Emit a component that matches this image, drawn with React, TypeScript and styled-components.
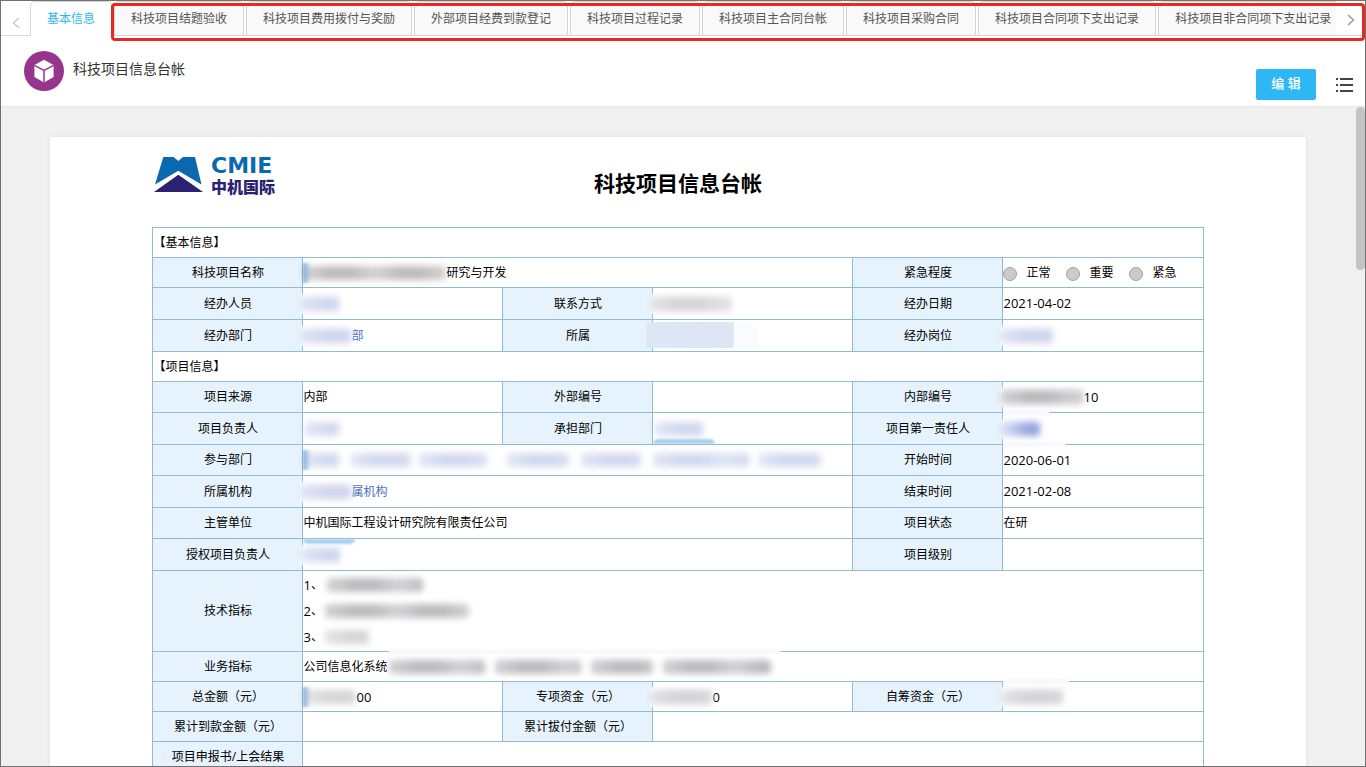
import React from 'react';
import styled, { createGlobalStyle, css } from 'styled-components';

const GlobalStyle = createGlobalStyle`
  * { box-sizing: border-box; }
  body {
    margin: 0;
    font-family: "Open Sans", "Noto Sans CJK SC", sans-serif;
    font-size: 12px;
    color: #000;
  }
  button { font: inherit; border: 0; padding: 0; background: none; cursor: pointer; }
`;

const LINE = '#92bad4';

const Page = styled.div`
  position: relative;
  display: flex;
  flex-direction: column;
  height: 100vh;
  overflow: hidden;
  border: 1px solid #727073;
  background: #fff;
`;

/* ---------- tabs ---------- */

const TabBar = styled.nav`
  display: flex;
  flex: none;
  height: 35px;
  box-shadow: inset 0 -1px #d6d6d6;
`;

const Arrow = styled.button<{ $faint?: boolean }>`
  display: flex;
  flex: none;
  align-items: center;
  justify-content: center;
  width: 29px;
  padding-top: ${(p) => (p.$faint ? '9px' : '2px')};
  color: ${(p) => (p.$faint ? '#c8c8c8' : '#999')};
`;

const TabStrip = styled.div`
  display: flex;
  flex: 1;
  gap: 2px;
  min-width: 0;
  overflow: hidden;
`;

const Tab = styled.button<{ $active?: boolean }>`
  && {
    flex: none;
    padding: 0 16px;
    border: 1px solid #d6d6d6;
    border-radius: 5px 5px 0 0;
    background: #f9f9f9;
    color: #555;
    line-height: 32px;
    white-space: nowrap;
    ${(p) =>
      p.$active &&
      css`
        border-bottom-color: #fff;
        background: #fff;
        color: #2db7f5;
      `}
  }
`;

const Highlight = styled.div`
  position: absolute;
  top: 2px;
  left: 110px;
  right: 0;
  height: 38px;
  border: 3px solid #e52a22;
  border-radius: 4px;
  pointer-events: none;
`;

/* ---------- header ---------- */

const Header = styled.header`
  display: flex;
  flex: none;
  gap: 9px;
  height: 71px;
  padding: 15px 12px 6px 23px;
  border-bottom: 1px solid #e6e6e6;
`;

const Badge = styled.span`
  display: flex;
  align-items: center;
  justify-content: center;
  width: 40px;
  height: 40px;
  border-radius: 50%;
  background: #96358c;
`;

const HeaderTitle = styled.span`
  flex: 1;
  color: #333;
  font-size: 14px;
  line-height: 36px;
`;

const Actions = styled.div`
  display: flex;
  align-items: center;
  align-self: flex-end;
  gap: 20px;
`;

const EditButton = styled.button`
  && {
    width: 60px;
    height: 31px;
    border-radius: 2px;
    background: #2db7f5;
    color: #fff;
    font-weight: 500;
    font-size: 13px;
    line-height: 28px;
    padding-bottom: 3px;
  }
`;

const MenuButton = styled.button`
  display: flex;
  color: #444;
`;

/* ---------- sheet ---------- */

const Canvas = styled.main`
  position: relative;
  flex: 1;
  min-height: 0;
  overflow: hidden;
  padding: 30px 59px 0 49px;
  background: #f0f0f0;
`;

const ScrollThumb = styled.div`
  position: absolute;
  top: 0;
  right: 0;
  width: 9px;
  height: 163px;
  border-radius: 5px;
  background: #c3c3c3;
`;

const Sheet = styled.article`
  display: flex;
  flex-direction: column;
  align-items: center;
  min-height: 100%;
  background: #fff;
  box-shadow: 0 0 4px rgba(0, 0, 0, 0.08);
`;

const SheetHead = styled.div`
  display: grid;
  grid-template-columns: 1fr auto 1fr;
  width: 100%;
  max-width: 1050px;
  height: 90px;
  padding-top: 19px;
`;

const Logo = styled.div`
  display: flex;
  gap: 8px;
  height: 40px;
  padding-left: 1px;
`;

const LogoText = styled.div`
  display: flex;
  flex-direction: column;
  font-weight: 700;
`;

const LogoLatin = styled.span`
  color: #0a68ae;
  font-family: "DejaVu Sans", sans-serif;
  font-size: 22px;
  line-height: 20px;
`;

const LogoHan = styled.span`
  color: #2a2170;
  font-family: "Noto Sans CJK SC", sans-serif;
  font-weight: 900;
  font-size: 16px;
  line-height: 20px;
`;

const SheetTitle = styled.h1`
  margin: 0;
  padding-top: 9px;
  font-size: 21px;
  font-weight: 700;
  line-height: 36px;
`;

const Grid = styled.table`
  width: 100%;
  max-width: 1050px;
  table-layout: fixed;
  border-collapse: collapse;
`;

const Row = styled.tr<{ $h: number }>`
  height: ${(p) => p.$h}px;
`;

const cell = css`
  position: relative;
  padding: 0;
  border: 1px solid ${LINE};
  font-weight: 400;
  line-height: 18px;
`;

const Section = styled.th`
  ${cell}
  text-align: left;
`;

const Label = styled.th`
  ${cell}
  background: #e6f3fc;
  background-clip: padding-box;
  text-align: center;
`;

const Value = styled.td`
  ${cell}
`;

const Line = styled.div<{ $tall?: boolean }>`
  display: flex;
  align-items: center;
  white-space: nowrap;
  line-height: ${(p) => (p.$tall ? '26px' : '18px')};
`;

const Num = styled.span`
  font-size: 13px;
`;

const Link = styled.a`
  color: #4a6fc0;
  text-decoration: none;
`;

const RadioLabel = styled.label`
  display: flex;
  align-items: center;
  gap: 9px;
  margin-right: 16px;
`;

const Radio = styled.input`
  appearance: none;
  width: 14px;
  height: 14px;
  margin: 3px 0 0;
  border: 1px solid #a2a2a2;
  border-radius: 50%;
  background: #cbcbcb;
`;

/* ---------- blurred-out values ---------- */

const tones = {
  grey: ['rgba(110,110,115,.46)', 'rgba(130,130,135,.38)'],
  dim: ['rgba(130,130,135,.33)', 'rgba(150,150,155,.28)'],
  blue: ['rgba(110,130,200,.31)', 'rgba(130,150,215,.26)'],
  ink: ['rgba(70,95,200,.55)', 'rgba(120,140,220,.35)'],
};

const Masked = styled.span<{ $gap?: number; $cover?: boolean }>`
  position: relative;
  display: flex;
  flex: none;
  align-items: center;
  height: 18px;
  margin-left: ${(p) => p.$gap ?? 0}px;
  ${(p) =>
    p.$cover &&
    css`
      background: rgba(252, 252, 254, 0.9);
      box-shadow: 0 0 3px 1px rgba(252, 252, 254, 0.9);
    `}
`;

const Smudge = styled.span<{ $w: number; $tone?: keyof typeof tones }>`
  width: ${(p) => p.$w}px;
  height: 14px;
  border-radius: 4px;
  background: repeating-linear-gradient(
    90deg,
    ${(p) => tones[p.$tone ?? 'grey'][1]} 0 6px,
    ${(p) => tones[p.$tone ?? 'grey'][0]} 26px 47px,
    ${(p) => tones[p.$tone ?? 'grey'][1]} 70px
  );
  filter: blur(3px);
`;

const BlueEdge = styled.span`
  position: absolute;
  top: -1px;
  left: 0;
  width: 8px;
  height: 20px;
  background: linear-gradient(90deg, rgba(111, 163, 210, 0.85), rgba(160, 200, 235, 0));
  filter: blur(1px);
`;

const BlueGlow = styled.span<{ $w: number; $low?: boolean }>`
  position: absolute;
  left: 0;
  ${(p) => (p.$low ? 'bottom: 0;' : 'top: 0;')}
  width: ${(p) => p.$w}px;
  height: 5px;
  border-radius: ${(p) => (p.$low ? '5px 5px 0 0' : '0 0 5px 5px')};
  background: #a8d0ee;
  filter: blur(1px);
`;

const Veil = styled.span<{ $w: number; $low?: boolean; $from?: number }>`
  position: absolute;
  left: ${(p) => p.$from ?? 0}px;
  ${(p) => (p.$low ? 'bottom: -3px;' : 'top: -3px;')}
  width: ${(p) => p.$w}px;
  height: 5px;
  background: #f7fafd;
`;

const Block = styled.span`
  position: absolute;
  top: 2px;
  left: -7px;
  width: 112px;
  height: 26px;
  background: linear-gradient(90deg, #dde7f7 0 20%, #dfe5f5 78%, #fafcff 79%);
`;

const tabs = [
  '基本信息',
  '科技项目结题验收',
  '科技项目费用拨付与奖励',
  '外部项目经费到款登记',
  '科技项目过程记录',
  '科技项目主合同台帐',
  '科技项目采购合同',
  '科技项目合同项下支出记录',
  '科技项目非合同项下支出记录',
];

const Chevron = ({ left }: { left?: boolean }) => (
  <svg width="8" height="12" viewBox="0 0 8 12" fill="none" stroke="currentColor" strokeWidth="1.5">
    <path d={left ? 'M7 1 1.5 6 7 11' : 'M1 1 6.5 6 1 11'} />
  </svg>
);

const CubeIcon = () => (
  <svg width="20" height="24" viewBox="0 0 20 24">
    <path fill="#fff" d="M10 .8 19.600 6V18L10 23.400.4 18V6Z" />
    <path fill="none" stroke="#96358c" strokeWidth="1.5" d="M.4 6.300 10 11.300 19.600 6.300M10 11.300V23.400" />
  </svg>
);

const ListIcon = () => (
  <svg width="17" height="15" viewBox="0 0 17 15" fill="currentColor">
    <path d="M0 1h2v2H0zM4 1h13v2H4zM0 7h2v2H0zM4 7h13v2H4zM0 13h2v2H0zM4 13h13v2H4z" />
  </svg>
);

const LogoMark = () => (
  <svg width="49" height="37" viewBox="0 0 49 37">
    <path fill="#0a68ae" d="M9.300 1H19.500L24.300 5 29 1H41L47.500 28.500 24.300 14.700 1 28.500Z" />
    <path fill="#2a2170" d="M0 36 24.300 18.700 49 36Z" />
  </svg>
);

export default function App() {
  return (
    <Page>
      <GlobalStyle />
      <TabBar>
        <Arrow $faint aria-label="上一页"><Chevron left /></Arrow>
        <TabStrip>
          {tabs.map((t, i) => (
            <Tab key={t} $active={i === 0}>{t}</Tab>
          ))}
        </TabStrip>
        <Arrow aria-label="下一页"><Chevron /></Arrow>
      </TabBar>
      <Highlight />

      <Header>
        <Badge><CubeIcon /></Badge>
        <HeaderTitle>科技项目信息台帐</HeaderTitle>
        <Actions>
          <EditButton>编 辑</EditButton>
          <MenuButton aria-label="菜单"><ListIcon /></MenuButton>
        </Actions>
      </Header>

      <Canvas>
        <Sheet>
          <SheetHead>
            <Logo>
              <LogoMark />
              <LogoText>
                <LogoLatin>CMIE</LogoLatin>
                <LogoHan>中机国际</LogoHan>
              </LogoText>
            </Logo>
            <SheetTitle>科技项目信息台帐</SheetTitle>
          </SheetHead>

          <Grid>
            <colgroup>
              <col width="150" /><col width="200" /><col width="150" />
              <col width="200" /><col width="150" /><col width="200" />
            </colgroup>
            <tbody>
              <Row $h={30}><Section colSpan={6}>【基本信息】</Section></Row>
              <Row $h={30}>
                <Label>科技项目名称</Label>
                <Value colSpan={3}>
                  <Line>
                    <Masked><Smudge $w={143} /><BlueEdge /></Masked>
                    研究与开发
                  </Line>
                </Value>
                <Label>紧急程度</Label>
                <Value>
                  <Line>
                    {['正常', '重要', '紧急'].map((o) => (
                      <RadioLabel key={o}><Radio type="radio" name="urgency" disabled />{o}</RadioLabel>
                    ))}
                  </Line>
                </Value>
              </Row>
              <Row $h={32}>
                <Label>经办人员</Label>
                <Value><Line><Masked $gap={-2} $cover><Smudge $w={38} $tone="blue" /></Masked></Line></Value>
                <Label>联系方式</Label>
                <Value><Line><Masked $gap={-2} $cover><Smudge $w={80} $tone="dim" /></Masked></Line></Value>
                <Label>经办日期</Label>
                <Value><Num>2021-04-02</Num></Value>
              </Row>
              <Row $h={32}>
                <Label>经办部门</Label>
                <Value>
                  <Line>
                    <Masked $gap={-2} $cover><Smudge $w={50} $tone="blue" /></Masked>
                    <Link href="#dept">部</Link>
                  </Line>
                </Value>
                <Label>所属</Label>
                <Value><Block /></Value>
                <Label>经办岗位</Label>
                <Value><Line><Masked $gap={-2} $cover><Smudge $w={52} $tone="blue" /></Masked></Line></Value>
              </Row>
              <Row $h={30}><Section colSpan={6}>【项目信息】</Section></Row>
              <Row $h={31}>
                <Label>项目来源</Label>
                <Value>内部</Value>
                <Label>外部编号</Label>
                <Value />
                <Label>内部编号</Label>
                <Value>
                  <Line>
                    <Masked $gap={-2} $cover><Smudge $w={82} /></Masked>
                    <Num>10</Num>
                  </Line>
                </Value>
              </Row>
              <Row $h={32}>
                <Label>项目负责人</Label>
                <Value><Line><Masked $gap={2}><Smudge $w={34} $tone="blue" /></Masked></Line></Value>
                <Label>承担部门</Label>
                <Value>
                  <Line><Masked $gap={2}><Smudge $w={48} $tone="blue" /></Masked></Line>
                  <BlueGlow $w={62} $low />
                </Value>
                <Label>项目第一责任人</Label>
                <Value>
                  <Veil $w={46} />
                  <Veil $w={62} $low />
                  <Line><Masked $gap={-1} $cover><Smudge $w={38} $tone="ink" /></Masked></Line>
                </Value>
              </Row>
              <Row $h={31}>
                <Label>参与部门</Label>
                <Value colSpan={3}>
                  <Line>
                    <Masked><Smudge $w={36} $tone="blue" /><BlueEdge /></Masked>
                    <Masked $gap={12}><Smudge $w={60} $tone="blue" /></Masked>
                    <Masked $gap={8}><Smudge $w={68} $tone="blue" /></Masked>
                    <Masked $gap={20}><Smudge $w={62} $tone="blue" /></Masked>
                    <Masked $gap={12}><Smudge $w={60} $tone="blue" /></Masked>
                    <Masked $gap={12}><Smudge $w={96} $tone="blue" /></Masked>
                    <Masked $gap={10}><Smudge $w={62} $tone="blue" /></Masked>
                  </Line>
                </Value>
                <Label>开始时间</Label>
                <Value><Num>2020-06-01</Num></Value>
              </Row>
              <Row $h={32}>
                <Label>所属机构</Label>
                <Value colSpan={3}>
                  <Line>
                    <Masked $gap={-2} $cover><Smudge $w={50} $tone="blue" /></Masked>
                    <Link href="#org">属机构</Link>
                  </Line>
                </Value>
                <Label>结束时间</Label>
                <Value><Num>2021-02-08</Num></Value>
              </Row>
              <Row $h={31}>
                <Label>主管单位</Label>
                <Value colSpan={3}>中机国际工程设计研究院有限责任公司</Value>
                <Label>项目状态</Label>
                <Value>在研</Value>
              </Row>
              <Row $h={32}>
                <Label>授权项目负责人</Label>
                <Value colSpan={3}>
                  <BlueGlow $w={52} />
                  <Line><Masked $gap={-1} $cover><Smudge $w={38} $tone="blue" /></Masked></Line>
                </Value>
                <Label>项目级别</Label>
                <Value />
              </Row>
              <Row $h={81}>
                <Label>技术指标</Label>
                <Value colSpan={5}>
                  <Line $tall><Num>1</Num>、<Masked $gap={4}><Smudge $w={96} /></Masked></Line>
                  <Line $tall><Num>2</Num>、<Masked $gap={2}><Smudge $w={144} /></Masked></Line>
                  <Line $tall><Num>3</Num>、<Masked $gap={2}><Smudge $w={44} $tone="dim" /></Masked></Line>
                </Value>
              </Row>
              <Row $h={30}>
                <Label>业务指标</Label>
                <Value colSpan={5}>
                  <Veil $from={86} $w={391} />
                  <Line>
                    公司信息化系统
                    <Masked $gap={2}><Smudge $w={96} /></Masked>
                    <Masked $gap={10}><Smudge $w={86} /></Masked>
                    <Masked $gap={10}><Smudge $w={62} /></Masked>
                    <Masked $gap={10}><Smudge $w={108} /></Masked>
                  </Line>
                </Value>
              </Row>
              <Row $h={30}>
                <Label>总金额（元）</Label>
                <Value>
                  <Line><Masked><Smudge $w={53} $tone="dim" /><BlueEdge /></Masked><Num>00</Num></Line>
                </Value>
                <Label>专项资金（元）</Label>
                <Value>
                  <Line><Masked $gap={-2} $cover><Smudge $w={61} $tone="dim" /></Masked><Num>0</Num></Line>
                </Value>
                <Label>自筹资金（元）</Label>
                <Value>
                  <Veil $w={66} />
                  <Line><Masked $gap={-1} $cover><Smudge $w={61} $tone="dim" /></Masked></Line>
                </Value>
              </Row>
              <Row $h={30}>
                <Label>累计到款金额（元）</Label>
                <Value />
                <Label>累计拔付金额（元）</Label>
                <Value colSpan={3} />
              </Row>
              <Row $h={30}>
                <Label>项目申报书/上会结果</Label>
                <Value colSpan={5} />
              </Row>
            </tbody>
          </Grid>
        </Sheet>
        <ScrollThumb />
      </Canvas>
    </Page>
  );
}
